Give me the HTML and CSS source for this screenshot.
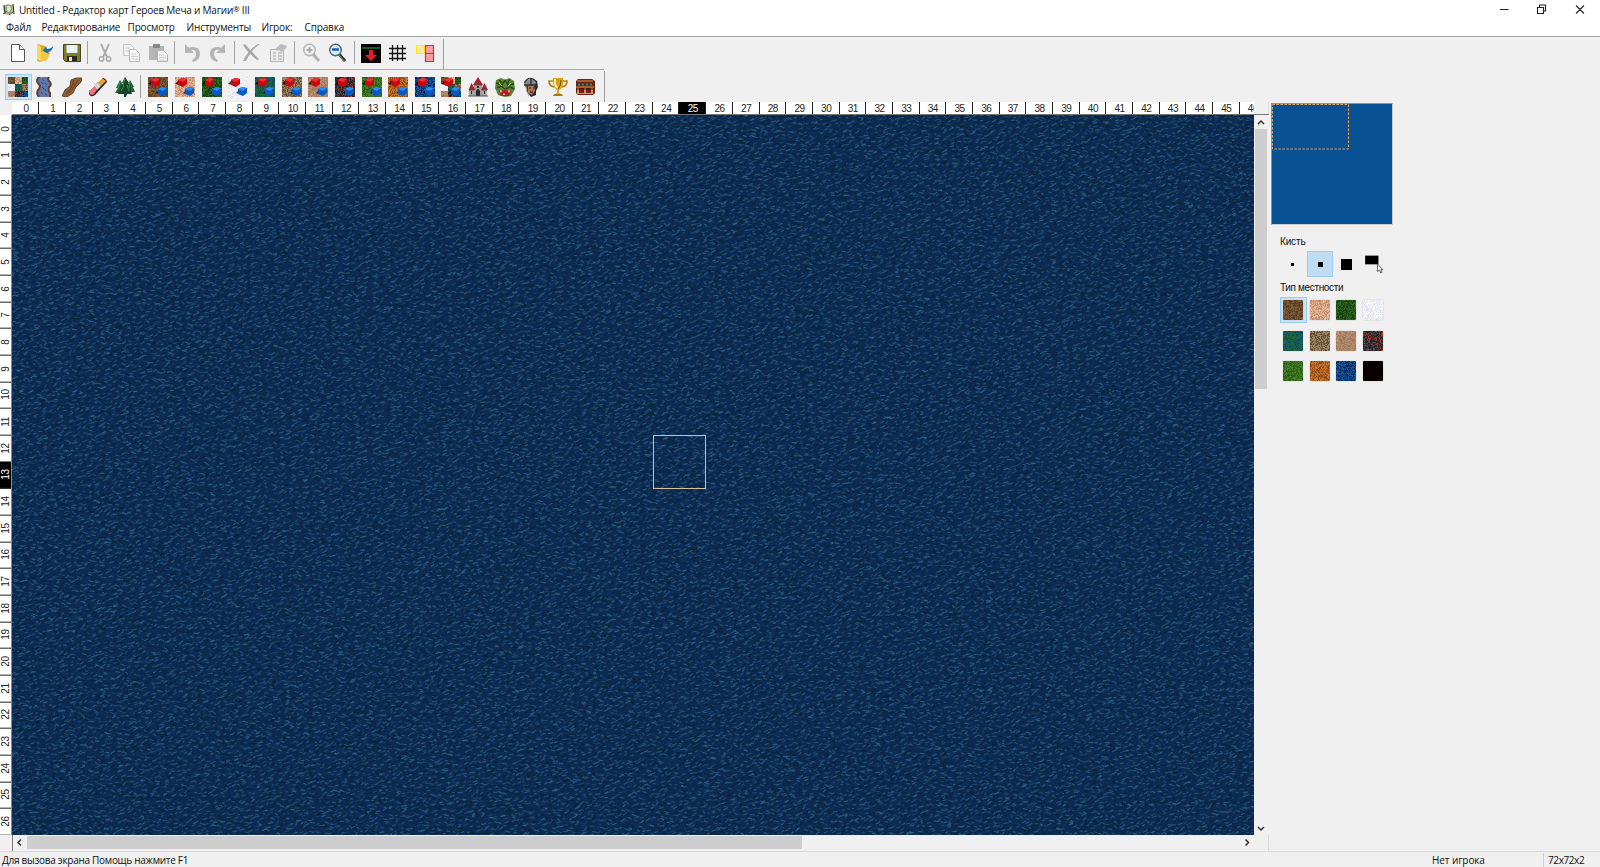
FILE: index.html
```html
<!DOCTYPE html>
<html lang="ru">
<head>
<meta charset="utf-8">
<title>Untitled - Редактор карт Героев Меча и Магии® III</title>
<link rel="stylesheet" href="styles.css">
</head>
<body>
<div class="app">
  <header class="titlebar">
    <svg class="app-icon" viewBox="0 0 13 13"><path d="M1 3l4-2 6 1 1 7-5 3-5-1z" fill="#c9b27c"/><path d="M2 2l1 9M11 1l1 10" stroke="#3d3a22" stroke-width="1.1"/><path d="M4 2h5l1 4-2 5-3-1-1-4z" fill="#62a8b7"/><path d="M5 3l3 0 1 3-2 3-2-1z" fill="#f3e6bd"/><path d="M1 11l4-3M7 12l4-3" stroke="#6b5427"/></svg>
    <span class="title">Untitled - Редактор карт Героев Меча и Магии<sup>®</sup> III</span>
    <svg class="controls" viewBox="0 0 100 18"><path d="M4 8.500h8.500M41.500 6.500h6v6h-6zM43.500 6v-2h6v6h-2M80 4.500l8 8M88 4.500l-8 8" fill="none" stroke="#222" stroke-width="1.100"/></svg>
  </header>
  <nav class="menu"><span class="m1">Файл</span><span class="m2">Редактирование</span><span class="m3">Просмотр</span><span class="m4">Инструменты</span><span class="m5">Игрок:</span><span class="m6">Справка</span></nav>

  <div class="toolbar toolbar-main">
    <button class="tool"><svg viewBox="0 0 20 20"><path d="M3.500 1.500h8l5 5v12h-13z" fill="#fff" stroke="#555"/><path d="M11.500 1.500v5h5" fill="#eee" stroke="#555"/></svg></button>
    <button class="tool"><svg viewBox="0 0 20 20"><path d="M2 1l8 2v4l5-1-3 11-8 2-2-2z" fill="#d9a51d"/><path d="M2 1l4 3v15l-4-3z" fill="#f8d960"/><path d="M6 9l4-2 6 1-4 9-7 2z" fill="#f1c748"/><path d="M18 3q0 5-5 6l1 2-6-3 3-5 1 3q4 0 6-3z" fill="#1670b8"/></svg></button>
    <button class="tool"><svg viewBox="0 0 20 20"><path d="M1.500 1.500h17v17h-15l-2-2z" fill="#7d7f2c" stroke="#45461d"/><path d="M4.500 2h11v8h-11z" fill="#e6f2f2"/><path d="M5 13h10v5h-10z" fill="#29291d"/><path d="M7 14h3v4h-3z" fill="#e4e4da"/></svg></button>
    <i class="sep"></i>
    <button class="tool off"><svg viewBox="0 0 20 20"><path d="M6 1l6 13M14 1l-6 13" fill="none" stroke="#aaa" stroke-width="1.800"/><circle cx="6.500" cy="16" r="2.200" fill="none" stroke="#aaa" stroke-width="1.500"/><circle cx="13.500" cy="16" r="2.200" fill="none" stroke="#aaa" stroke-width="1.500"/></svg></button>
    <button class="tool off"><svg viewBox="0 0 20 20"><path d="M1.500 1.500h7l3 3v8h-10z" fill="#f5f5f5" stroke="#c2c2c2"/><path d="M7.500 6.500h6l4 4v8h-10z" fill="#f5f5f5" stroke="#b8b8b8"/><path d="M3 5h5M3 8h4M9 11h5M9 13.500h7M9 16h7" stroke="#ccc"/></svg></button>
    <button class="tool off"><svg viewBox="0 0 20 20"><path d="M1 3h15v14h-15z" fill="#b5b5b5"/><path d="M5 1h7v4h-7z" fill="#888"/><path d="M9.500 7.500h6l4 4v7h-10z" fill="#f5f5f5" stroke="#b4b4b4"/><path d="M11 12h5M11 14.500h7M11 17h7" stroke="#ccc"/></svg></button>
    <i class="sep"></i>
    <button class="tool off"><svg viewBox="0 0 20 20"><path d="M3 1v9h9l-3-3q5-1 5 4 0 4-4 6l1 2q7-2 7-8 0-8-9-7l-2 1z" fill="#b4b4b4"/></svg></button>
    <button class="tool off"><svg viewBox="0 0 20 20"><path d="M17 1v9h-9l3-3q-5-1-5 4 0 4 4 6l-1 2q-7-2-7-8 0-8 9-7l2 1z" fill="#b4b4b4"/></svg></button>
    <i class="sep"></i>
    <button class="tool off"><svg viewBox="0 0 20 20"><path d="M1 2l2-1q5 6 14 15l-2 1q-9-7-14-15z M18 1q-8 5-14 17l-3 0q5-11 15-17z" fill="#a8a8a8"/></svg></button>
    <button class="tool off"><svg viewBox="0 0 20 20"><path d="M2.500 6.500h13v12h-13z" fill="#eee" stroke="#b5b5b5"/><path d="M5 10h3M10 10h4M5 13h3M10 13h4M5 16h3M10 16h4" stroke="#bbb" stroke-width="1.500"/><path d="M8 5l5-4 6 2-3 5-3 1-2-2-2 1z" fill="#bcbcbc"/></svg></button>
    <i class="sep"></i>
    <button class="tool off"><svg viewBox="0 0 20 20"><path d="M11 11l6 7" stroke="#b0b0b0" stroke-width="3"/><circle cx="7.500" cy="7" r="5.800" fill="#f2f2f2" stroke="#b2b2b2" stroke-width="1.400"/><path d="M4.500 7h6M7.500 4v6" stroke="#aaa" stroke-width="2"/></svg></button>
    <button class="tool"><svg viewBox="0 0 20 20"><path d="M11 11l6 7" stroke="#30343a" stroke-width="3"/><path d="M11 12l5 6" stroke="#b88731"/><circle cx="7.500" cy="7" r="5.800" fill="#d8f0fd" stroke="#4c6575" stroke-width="1.400"/><path d="M4 6.500h7" stroke="#1355b6" stroke-width="2.400"/></svg></button>
    <i class="sep"></i>
    <button class="tool"><svg viewBox="0 0 20 20"><path d="M0 1h20v19h-20z" fill="#080000"/><path d="M1 5h18" stroke="#168c1b" stroke-width="1.400"/><path d="M8 7h4v5h4l-6 6-6-6h4z" fill="#e71a25"/></svg></button>
    <button class="tool"><svg viewBox="0 0 20 20"><path d="M4.500 2v16M9.500 2v16M14.500 2v16M1 5.500h17M1 10.500h17M1 15.500h17" stroke="#111" stroke-width="1.300"/></svg></button>
    <button class="tool"><svg viewBox="0 0 20 20"><path d="M1.500 2.500h8v8h-8z" fill="#f5e99b" stroke="#ffed00"/><path d="M10.500 2.500h8v16h-8zM10.500 10.500h8" fill="#f5a0a5" stroke="#ef2332" stroke-width="1.200"/></svg></button>
  </div>

  <div class="toolbar toolbar-objects">
    <button class="tool active"><span class="quilt"><canvas data-t="mix"></canvas></span></button>
    <button class="tool"><svg viewBox="0 0 20 20"><path d="M3 0h11q-2 3 1 5 2 3-1 5-1 4 1 6v4h-11q-3-4 0-7 2-3-1-6-2-3 0-7z" fill="#5e75ad"/><path d="M4 0q-4 4 0 7 2 3-1 6-2 4 1 7M14 0q-2 3 1 5 2 3-1 5-1 4 1 6v4" fill="none" stroke="#5f4129" stroke-width="2"/><path d="M7 2l2 2M6 5l2 2M10 6l2 2M7 10l2 2M10 12l1 2M6 15l2 2M10 17l2 1" stroke="#324b80"/></svg></button>
    <button class="tool"><svg viewBox="0 0 20 20"><path d="M9 3l5-2 6 0-1 4-5 5-3 6-6 4-5-1 3-6 5-4z" fill="#8b6035" stroke="#4b2e12" stroke-width=".8"/><path d="M12 3l-3 8-5 6M16 3l-5 8-4 5" stroke="#65401d" fill="none"/></svg></button>
    <button class="tool"><svg viewBox="0 0 20 20"><path d="M1 14l13-13q4 0 5 4l-12 13q-4 3-6-1z" fill="#29221f"/><path d="M10 5l4-4 4 3-5 5z" fill="#e6a325"/><path d="M6 9l4-4 3 4-4 4z" fill="#d5d5d5"/><path d="M1 14l5-5 3 4-4 5q-4 0-4-4z" fill="#e9747d"/><path d="M2 13l5-5M10 5l4-4" stroke="#fff"/></svg></button>
    <button class="tool"><svg viewBox="0 0 20 20"><path d="M5 3l4 7-2 0 2 6h-9l3-5h-2zM15 3l4 7h-1l2 5h-9l2-7z" fill="#1d6339"/><path d="M10 0l4 6h-1l3 5h-1l2 6h-5l-1 3h-2v-3h-6l3-6h-1l3-5h-1z" fill="#124324"/><path d="M10 2l-2 6 1 1-3 5M15 5l-1 6M5 5l-2 6M12 8l2 6" stroke="#3c8b50" fill="none"/></svg></button>
    <i class="sep"></i>
    <span class="terrain-tools" id="terrain-tools"></span>
    <button class="tool"><svg viewBox="0 0 20 20"><path d="M1 12h18v7h-18z" fill="#aaa9a5"/><path d="M6 6h8v13h-8z" fill="#a49f9b"/><path d="M10 0l5 8h-10zM3.500 6l4 7h-7zM16.500 6l3.500 7h-7z" fill="#a8202b"/><path d="M8 14q2-4 4 0v5h-4zM3 14h1v3h-1zM16 14h1v3h-1zM9 9h2v2h-2z" fill="#28242d"/><path d="M0 19h20M1 13h5M14 13h5M6 8h8" stroke="#52514f"/></svg></button>
    <button class="tool"><svg viewBox="0 0 20 20"><path d="M1 3l5-2 4 2 4-2 5 3 1 8-4 7-6 1-7-2-3-7z" fill="#5b8433"/><path d="M1 6l6 2 3-5 3 5 6-1M2 11l4-2 4 3 5-2 4 2M4 3l3 3M15 2l-3 5" fill="none" stroke="#28481c" stroke-width="1.400"/><path d="M4 13.500l12-.5-2 6h-8z" fill="#b01c22"/><path d="M5 13.500l1 2.500 1-2.500zM13 13.500l1 2.500 1-2.500zM8 18l1-2 1 2z" fill="#fff"/><path d="M4 6l3 3M16 6l-3 3" stroke="#e0dc38"/></svg></button>
    <button class="tool"><svg viewBox="0 0 20 20"><path d="M3 5q5-8 13-1l1 6-2 4v4l-5 2-4-5z" fill="#29292e"/><path d="M4 6q4-8 11-1l-1 4h-10z" fill="#85888f"/><path d="M7 9h6l1 5-3 4-4-2z" fill="#a77557"/><path d="M10 1v8M3 8h13" stroke="#292a31" stroke-width="1.300"/><path d="M7 3l2-1M5 9l1 6 2 4" stroke="#aaa" fill="none"/><path d="M8 11h2M12 11h1M9 15h3" stroke="#33170e"/></svg></button>
    <button class="tool"><svg viewBox="0 0 20 20"><path d="M5 4h-4q0 5 5 6M15 4h4q0 5-5 6" fill="none" stroke="#b7820f" stroke-width="1.700"/><path d="M5 1h10q1 10-4 12v3l4 2v1h-10v-1l4-2v-3q-5-3-4-12z" fill="#d5a11b"/><path d="M7 2q-1 7 3 9" fill="none" stroke="#fff49b" stroke-width="2"/><path d="M13 3q0 6-3 9M6 18h8" fill="none" stroke="#7a5106"/></svg></button>
    <button class="tool"><svg viewBox="0 0 20 20"><path d="M1 4l2-2h14l3 2v12l-2 2h-15l-2-2z" fill="#6e2114"/><path d="M2 4h16M1 10h18M2 16.500h16" stroke="#d0a04a" stroke-width="1.200" fill="none"/><path d="M3 7.500h15" stroke="#1f9382" stroke-width="2" stroke-dasharray="2 2"/><path d="M3 11v5M10 11v5M17 11v5" stroke="#e6c363" stroke-width="1.500"/><path d="M1 12h18" stroke="#30100a"/></svg></button>
  </div>

  <main class="workspace">
    <section class="editor">
      <div class="corner"></div>
      <div class="ruler-x" id="ruler-x"></div>
      <div class="ruler-gap"></div>
      <div class="ruler-y" id="ruler-y"></div>
      <div class="map"><canvas id="water" width="1242" height="720"></canvas><div class="brush-cursor"></div></div>
      <div class="scroll-y"><svg viewBox="0 0 14 14"><path d="M4 9l3-3 3 3"/></svg><div class="thumb"></div><svg class="end" viewBox="0 0 14 14"><path d="M4 6l3 3 3-3"/></svg></div>
      <div class="blank"></div>
      <div class="scroll-x"><svg viewBox="0 0 14 14"><path d="M8 3.500l-3 3 3 3"/></svg><div class="thumb"></div><svg class="end" viewBox="0 0 14 14"><path d="M5.500 3.500l3 3-3 3"/></svg></div>
      <div class="blank"></div>
    </section>
    <aside class="panel">
      <div class="minimap"><div class="viewport"><svg viewBox="0 0 78 46"><rect x=".5" y=".5" width="76" height="44.500"/></svg></div></div>
      <div class="label brush-label">Кисть</div>
      <div class="brushes">
        <span><i class="b1"></i></span><span class="selected"><i class="b2"></i></span><span><i class="b3"></i></span>
        <span><svg viewBox="0 0 26 26"><path d="M5 4.500h13v8.500h-13z"/><path d="M17 12.500v7.500l2-1.500 1.200 3 1.300-.6-1.200-2.700h2z" fill="#fff" stroke="#445" stroke-width=".8"/></svg></span>
      </div>
      <div class="label terrain-label">Тип местности</div>
      <div class="terrains" id="terrains"></div>
    </aside>
  </main>
  <footer class="status"><span class="help">Для вызова экрана Помощь нажмите F1</span><span class="player">Нет игрока</span><span class="size">72x72x2</span></footer>
</div>
<script src="app.js"></script>
</body>
</html>
```
FILE: styles.css
```css
* { box-sizing: border-box; }
body { margin: 0; background: #f0f0f0; color: #111; font-family: "Open Sans", "Noto Sans", sans-serif; overflow: hidden; }
.app { width: 1600px; height: 867px; display: flex; flex-direction: column; }
.titlebar { height: 19px; background: #fff; display: flex; align-items: center; padding-left: 2px; font-size: 10px; }
.app-icon { width: 13px; height: 13px; margin-right: 4px; }
.title { white-space: nowrap; letter-spacing: -.22px; line-height: 14px; }
.title sup { font-size: 8px; line-height: 0; vertical-align: 2px; }
.controls { width: 100px; height: 18px; margin-left: auto; margin-right: 4px; }
.menu { height: 17px; background: #fff; display: flex; align-items: center; font-size: 10px; line-height: 14px; padding: 0 0 2px 6px; white-space: nowrap; letter-spacing: -.15px; }
.m1 { width: 35.500px; } .m2 { width: 86px; } .m3 { width: 59px; } .m4 { width: 75px; } .m5 { width: 43px; }
.toolbar { border-top: 1px solid #a3a3a3; display: flex; align-items: center; }
.toolbar-main { height: 34px; width: 1600px; padding: 0 0 2px 5px; background: linear-gradient(#a0a0a0, #a0a0a0) 443px 2px / 1px 31px no-repeat #f0f0f0; }
.toolbar-objects { height: 32px; padding: 1px 0 0 5px; background: linear-gradient(#a0a0a0, #a0a0a0) 604px 1px / 1px 31px no-repeat #f0f0f0; border-top: 0; position: relative; }
.toolbar-objects::before { content: ""; position: absolute; left: 0; top: -1px; width: 604px; height: 1px; background: #aaa; }
.tool { width: 26.667px; height: 26px; flex: none; border: 0; padding: 0; background: none; display: flex; align-items: center; justify-content: center; }
.tool svg { width: 20px; height: 20px; }
.tool.active { background: #cce4f7; border: 1px solid #99ccf3; }
.tool canvas { width: 20px; height: 20px; display: block; }
.quilt { display: block; }
.sep { width: 6.667px; height: 23px; flex: none; background: linear-gradient(#a0a0a0, #a0a0a0) 2px 0 / 1px 100% no-repeat; }
.terrain-tools { display: flex; }
.stack { display: grid; }
.stack > * { grid-area: 1 / 1; }
.workspace { height: 749px; display: flex; }
.editor { width: 1269px; display: grid; grid-template: 13px 720px 16px / 12px 1242px 15px; border-right: 1px solid #ddd; }
.ruler-x { background: #fff; border-bottom: 1px solid #777; display: flex; overflow: hidden; padding-left: .7px; }
.ruler-x span { flex: none; width: 26.685px; height: 12px; padding-left: 1px; border-right: 1px solid #222; font: 10px/13px "Liberation Sans", sans-serif; letter-spacing: -.5px; text-align: center; color: #222; }
.ruler-gap { border-bottom: 1px solid #777; }
.ruler-y { background: #fff; border-right: 1px solid #888; overflow: hidden; padding-top: .5px; }
.ruler-y span { display: flex; align-items: center; justify-content: center; writing-mode: vertical-rl; transform: rotate(180deg); width: 11px; height: 26.685px; border-top: 1px solid #222; font: 10px/11px "Liberation Sans", sans-serif; letter-spacing: -.5px; color: #222; }
.ruler-x .here, .ruler-y .here { background: #000; color: #fff; }
.map { position: relative; background: #0e2d57; overflow: hidden; }
.map canvas { display: block; }
.brush-cursor { position: absolute; left: 641px; top: 320px; width: 53px; height: 54px; border: 1px solid #d2c0a5; }
.scroll-y { display: flex; flex-direction: column; background: #f0f0f0; }
.scroll-y svg, .scroll-x svg { width: 14px; height: 14px; flex: none; fill: none; stroke: #333; stroke-width: 1.500; }
.scroll-y .thumb { width: 12px; height: 260px; margin-left: 1px; background: #cdcdcd; }
.scroll-y .end { margin-top: auto; }
.scroll-x { display: flex; align-items: flex-start; padding-top: 1px; background: #f0f0f0; border-left: 1px solid #777; }
.scroll-x .thumb { width: 775px; height: 13px; background: #cdcdcd; }
.scroll-x .end { margin-left: auto; }
.panel { padding: 1px 0 0 2px; }
.minimap { width: 122px; height: 122px; background: #085294; border: 1px solid #8b8f94; border-right-color: #ccc; border-bottom-color: #ccc; }
.viewport { width: 78px; height: 46px; }
.viewport svg { display: block; width: 78px; height: 46px; fill: none; stroke: #e8a861; stroke-dasharray: 2.500 1.500; }
.label { font: 10px/12px "Liberation Sans", sans-serif; margin-left: 9px; letter-spacing: -.15px; }
.brush-label { margin-top: 11px; }
.terrain-label { letter-spacing: -.35px; }
.brushes { display: flex; margin: 3px 0 5px 9px; }
.brushes span { width: 26.667px; height: 26px; display: flex; align-items: center; justify-content: center; }
.brushes .selected { background: #c0dcf3; border: 1px solid #99ccf3; padding-left: 1px; }
.brushes i { background: #000; }
.b1 { width: 3px; height: 3px; margin-right: 2px; } .b2 { width: 5px; height: 5px; } .b3 { width: 11px; height: 11px; }
.terrains { display: grid; grid-template-columns: repeat(4, 26.500px); grid-auto-rows: 30.700px; margin: 3px 0 0 9px; }
.terrains span { height: 26px; display: flex; align-items: center; justify-content: center; }
.terrains canvas { width: 20px; height: 20px; border-radius: 1px; box-shadow: 0 0 1px #888; }
.terrains .selected { background: #cce4f7; border: 1px solid #99ccf3; }
.status { height: 16px; border-top: 1px solid #d7d7d7; display: flex; align-items: center; font-size: 10px; padding-left: 2px; white-space: nowrap; letter-spacing: -.1px; }
.help { flex: 1; letter-spacing: -.28px; }
.player { width: 111px; }
.size { width: 57px; height: 14px; line-height: 14px; border-left: 1px solid #d0d0d0; padding-left: 4px; letter-spacing: -.4px; }
```
FILE: app.js
```js
// Deterministic random numbers keep the terrain textures stable
let seed = 7;
function rnd() {
  seed = (seed * 1664525 + 1013904223) % 4294967296;
  return seed / 4294967296;
}
const palettes = {
  dirt: ['#6e4b2b', '#4f3822', '#85663f'],
  sand: ['#d8a687', '#bc8262', '#edc5a7'],
  grass: ['#235318', '#153b0b', '#33702a'],
  snow: ['#eeeef3', '#dcdee8', '#ffffff'],
  swamp: ['#145c66', '#255f22', '#0b4154', '#256b30'],
  rough: ['#81684b', '#574027', '#ad9676'],
  subterranean: ['#ad8465', '#9a7556', '#bd9576'],
  lava: ['#383036', '#191519', '#625057', '#38292e', '#ff3a10'],
  highlands: ['#38701c', '#255410', '#538930'],
  wasteland: ['#ad5e20', '#83400e', '#cf8140'],
  water: ['#08458a', '#061f45', '#1e63a8'],
  rock: ['#080001']
};
function paint(c, name) {
  c.width = c.height = 20;
  const x = c.getContext('2d');
  const quilt = ['dirt', 'sand', 'grass', 'snow', 'swamp', 'rough', 'subterranean', 'lava', 'water'];
  for (let j = 0; j < 20; j++) for (let i = 0; i < 20; i++) {
    const key = name === 'mix' ? quilt[Math.min(2, Math.floor(j / 6.67)) * 3 + Math.min(2, Math.floor(i / 6.67))] : name;
    const p = palettes[key];
    const k = key === 'lava' && rnd() > .35 ? Math.floor(rnd() * 4) : Math.floor(rnd() * p.length);
    x.globalAlpha = 1; x.fillStyle = p[0]; x.fillRect(i, j, 1, 1);
    x.globalAlpha = .7; x.fillStyle = p[k]; x.fillRect(i, j, rnd() < .5 ? 1 : 2, 1);
  }
}
document.querySelectorAll('canvas[data-t]').forEach(c => paint(c, c.dataset.t));
const gems = '<svg viewBox="0 0 20 20"><path d="M0 7l4-4 1 5zM8 16l3-3 1 4z" opacity=".75"/><path d="M3 3l4-2 5 1v5l-4 3-5-2z" fill="#c40912"/><path d="M3 3l4-2 5 1-4 3z" fill="#f52f31"/><path d="M10 12l4-2 5 1v5l-4 3-5-2z" fill="#0858c2"/><path d="M10 12l4-2 5 1-4 3z" fill="#2d8cf0"/></svg>';
const names = ['dirt', 'sand', 'grass', 'snow', 'swamp', 'rough', 'subterranean', 'lava', 'highlands', 'wasteland', 'water'];
[...names, 'mix'].forEach(n => {
  const b = document.createElement('button');
  b.className = 'tool';
  b.innerHTML = '<span class="stack"><canvas></canvas>' + gems + '</span>';
  paint(b.querySelector('canvas'), n);
  document.getElementById('terrain-tools').append(b);
});
[...names, 'rock'].forEach((n, i) => {
  const s = document.createElement('span');
  if (!i) s.className = 'selected';
  const c = document.createElement('canvas');
  paint(c, n);
  s.append(c);
  document.getElementById('terrains').append(s);
});
function ruler(id, count, here) {
  for (let i = 0; i < count; i++) {
    const s = document.createElement('span');
    s.textContent = i;
    if (i === here) s.className = 'here';
    document.getElementById(id).append(s);
  }
}
ruler('ruler-x', 47, 25);
ruler('ruler-y', 27, 13);

// Water: short ripples jittered on a fine grid so the surface stays even
const w = document.getElementById('water').getContext('2d');
w.fillStyle = '#0d2b52';
w.fillRect(0, 0, 1242, 720);
function ripples(stepX, stepY, color, alpha, width) {
  w.strokeStyle = color;
  w.lineWidth = width;
  for (let y = 0; y < 722; y += stepY) for (let x = -4; x < 1244; x += stepX) {
    const px = x + rnd() * stepX, py = y + rnd() * stepY;
    const len = 2 + rnd() * 3, rise = rnd() < .62 ? -.5 - rnd() * 2.2 : rnd() * 2;
    w.globalAlpha = alpha * (.5 + rnd() * .5);
    w.beginPath();
    w.moveTo(px, py);
    w.quadraticCurveTo(px + len * .6, py + rise * .3, px + len, py + rise);
    w.stroke();
  }
}
ripples(5.5, 4, '#092230', .8, 1.3);
ripples(7, 5.5, '#123b70', .6, 1.2);
ripples(5.8, 4.2, '#3a7090', .72, 1.15);
```
